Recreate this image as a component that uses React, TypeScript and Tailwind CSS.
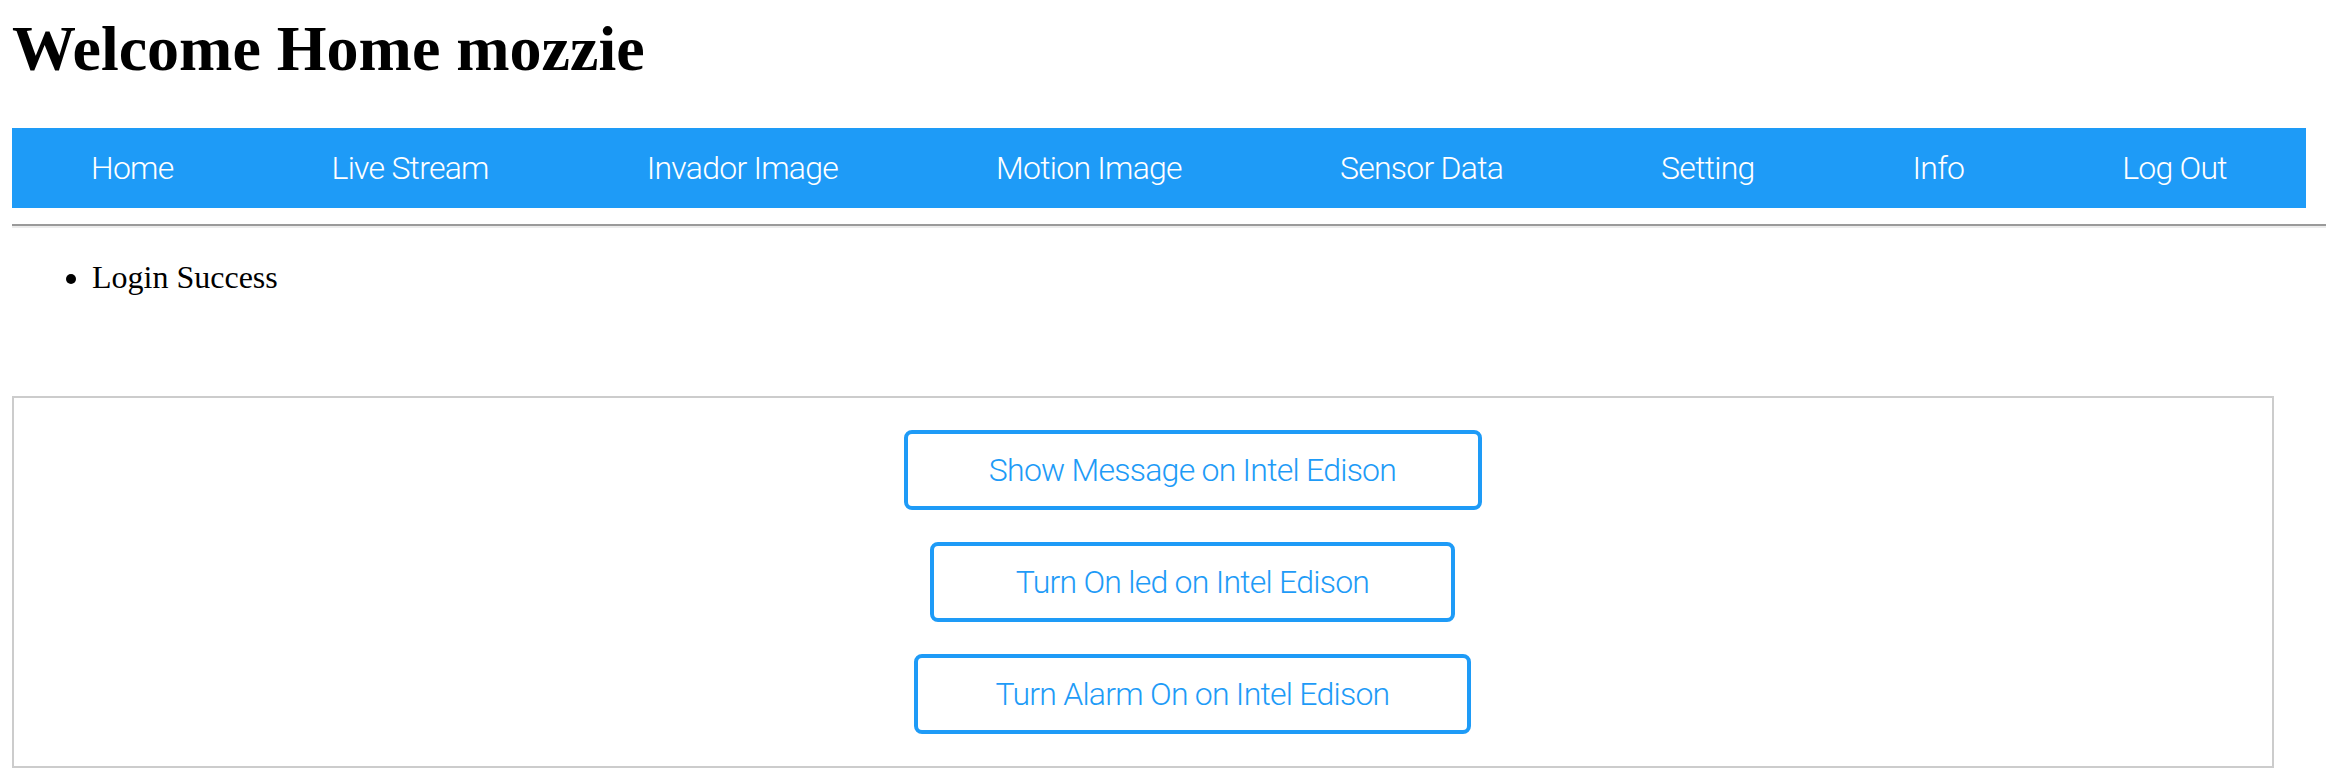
const navItems = ["Home", "Live Stream", "Invador Image", "Motion Image", "Sensor Data", "Setting", "Info", "Log Out"];

const actions = [
  { label: "Show Message on Intel Edison", width: "w-[578px]" },
  { label: "Turn On led on Intel Edison", width: "w-[525px]" },
  { label: "Turn Alarm On on Intel Edison", width: "w-[557px]" },
];

export default function App() {
  return (
    <div className="min-h-screen bg-white pl-[12px] pt-[12px] text-black font-['Liberation_Serif',serif]">
      {/* Title */}
      <h1 className="text-[64px] leading-[74px] font-bold mb-[42px]">Welcome Home mozzie</h1>

      {/* Navigation bar */}
      <nav className="w-[2294px] h-[80px] bg-[#1e9bf7] flex items-center justify-around font-['Roboto','Liberation_Sans',sans-serif] font-light tracking-[-0.75px] text-white text-[32px]">
        {navItems.map((item) => (
          <a key={item} href="#" className="leading-[37px] whitespace-nowrap">
            {item}
          </a>
        ))}
      </nav>

      <hr className="mt-[16px] h-[4px] border-0 border-t-2 border-b-2 border-t-[#9a9a9a] border-b-[#ececec]" />

      {/* Flash messages */}
      <ul className="mt-[31px] pl-[80px] list-disc text-[32px] leading-[37px]">
        <li>Login Success</li>
      </ul>

      {/* Device controls */}
      <div className="mt-[100px] w-[2262px] border-2 border-[#cccccc] py-[32px] pl-[99px] flex flex-col items-center gap-[32px]">
        {actions.map((a) => (
          <button
            key={a.label}
            className={`${a.width} h-[80px] border-4 border-[#1e9bf7] rounded-[8px] bg-white flex items-center justify-center text-[#1e9bf7] text-[32px] font-light tracking-[-0.75px] font-['Roboto','Liberation_Sans',sans-serif] whitespace-nowrap`}
          >
            {a.label}
          </button>
        ))}
      </div>
    </div>
  );
}
